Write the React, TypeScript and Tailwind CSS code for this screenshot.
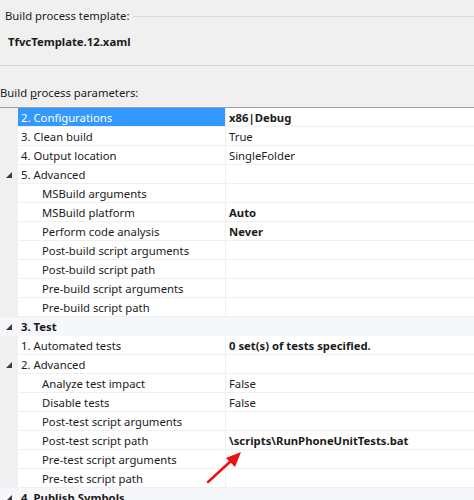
type Row = {
    name: string;
    value?: string;
    bold?: boolean;
    indent?: boolean;
    expander?: boolean;
    category?: boolean;
    selected?: boolean;
};

const rows: Row[] = [
    { name: "2. Configurations", value: "x86|Debug", bold: true, selected: true },
    { name: "3. Clean build", value: "True" },
    { name: "4. Output location", value: "SingleFolder" },
    { name: "5. Advanced", expander: true },
    { name: "MSBuild arguments", indent: true },
    { name: "MSBuild platform", value: "Auto", bold: true, indent: true },
    { name: "Perform code analysis", value: "Never", bold: true, indent: true },
    { name: "Post-build script arguments", indent: true },
    { name: "Post-build script path", indent: true },
    { name: "Pre-build script arguments", indent: true },
    { name: "Pre-build script path", indent: true },
    { name: "3. Test", category: true, expander: true },
    { name: "1. Automated tests", value: "0 set(s) of tests specified.", bold: true },
    { name: "2. Advanced", expander: true },
    { name: "Analyze test impact", value: "False", indent: true },
    { name: "Disable tests", value: "False", indent: true },
    { name: "Post-test script arguments", indent: true },
    { name: "Post-test script path", value: "\\scripts\\RunPhoneUnitTests.bat", bold: true, indent: true },
    { name: "Pre-test script arguments", indent: true },
    { name: "Pre-test script path", indent: true },
    { name: "4. Publish Symbols", category: true, expander: true },
];

const Expander = () => (
    <svg width="6" height="6" viewBox="0 0 6 6" className="mt-[1px]">
        <polygon points="6,0 6,6 0,6" fill="#3c3c3c" />
    </svg>
);

const GridRow = ({ row }: { row: Row }) => {
    if (row.category) {
        return (
            <div className="flex h-[19px] bg-[#f5f7fa]">
                <div className="w-[18px] flex items-center justify-center">
                    <Expander />
                </div>
                <div className="flex-1 pl-[3px] pt-[1px] font-bold leading-[18px]">
                    {row.name}
                </div>
            </div>
        );
    }
    return (
        <div className="flex h-[19px]">
            <div className="w-[18px] bg-[#f0f0f0] flex items-center justify-center">
                {row.expander && <Expander />}
            </div>
            <div
                className={`w-[208px] shrink-0 border-r border-b border-[#f0f0f0] pt-[1px] leading-[17px] ${
                    row.indent ? "pl-[24px]" : "pl-[3px]"
                } ${row.selected ? "bg-[#3399ff] text-white" : "bg-white"}`}
            >
                {row.name}
            </div>
            <div
                className={`flex-1 bg-white border-b border-[#f0f0f0] pl-[3px] pt-[1px] leading-[17px] whitespace-nowrap ${
                    row.bold ? "font-bold" : ""
                }`}
            >
                {row.value}
            </div>
        </div>
    );
};

const App = () => {
    return (
        <div
            className="relative w-[474px] h-[500px] overflow-hidden bg-[#f0f0f0] text-[11.3px] text-[#1b1b1b]"
            style={{ fontFamily: '"Noto Sans", "Open Sans", sans-serif' }}
        >
            <div className="flex items-center pt-[7px] h-[25px]">
                <span className="pl-[5px] pr-[3px] leading-[18px]">
                    Build process template:
                </span>
                <div className="flex-1 border-t border-[#d8d8d8] mt-[1px]" />
            </div>
            <div className="pl-[8px] pt-[8px] h-[40px] font-bold leading-[18px]">
                TfvcTemplate.12.xaml
            </div>
            <div className="border-t border-[#d8d8d8]" />
            <div className="pt-[18px] h-[41px] leading-[18px]">
                Build <span className="underline">p</span>rocess parameters:
            </div>
            <div className="border-t border-[#a0a0a0]">
                {rows.map((row, i) => (
                    <GridRow key={i} row={row} />
                ))}
            </div>
            <svg
                className="absolute left-[204px] top-[448px]"
                width="40"
                height="38"
                viewBox="0 0 40 38"
            >
                <line
                    x1="4"
                    y1="34"
                    x2="28"
                    y2="12"
                    stroke="#ee1111"
                    strokeWidth="2.5"
                    strokeLinecap="round"
                />
                <polygon points="37,4 22,10 31,19" fill="#ee1111" />
            </svg>
        </div>
    );
};

export default App;
